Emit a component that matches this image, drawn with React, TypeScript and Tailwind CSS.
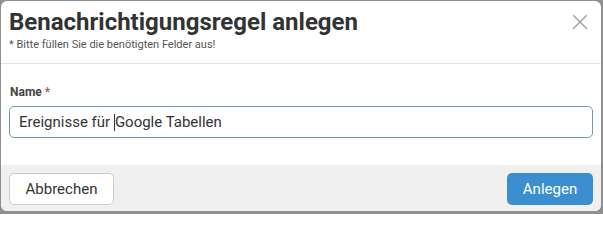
import React from "react";

export default function App() {
  return (
    <div className="w-[603px] h-[214px] bg-[#8f8f8f] pt-px pl-px" style={{ fontFamily: "Roboto, 'Liberation Sans', sans-serif" }}>
      <div className="w-[600px] h-[210px] bg-white rounded-[6px] overflow-hidden flex flex-col">
        <div className="relative px-2 pt-[7px] h-[63px] border-b border-[#e3e3e3]">
          <div className="text-[24px] leading-[28px] font-bold text-[#333333]">Benachrichtigungsregel anlegen</div>
          <div className="text-[11px] leading-[14px] text-[#555555] mt-[2px]">* Bitte füllen Sie die benötigten Felder aus!</div>
          <button className="absolute right-[13px] top-[13px] w-[16px] h-[16px] flex items-center justify-center">
            <svg width="16" height="16" viewBox="0 0 16 16" fill="none" stroke="#9a9a9a" strokeWidth="1.3" strokeLinecap="round">
              <path d="M1.5 1.5 L14.5 14.5 M14.5 1.5 L1.5 14.5" />
            </svg>
          </button>
        </div>
        <div className="px-2 pt-[20px] h-[101px] flex flex-col">
          <label className="text-[12px] leading-[16px] font-bold text-[#444444] pl-px">
            Name <span className="text-[#a85a5a]">*</span>
          </label>
          <div className="mt-[6px] h-[32px] border border-[#6a9ca8] rounded-[5px] flex items-center pl-[9px] text-[15px] text-[#333333] whitespace-pre">
            <span>{"Ereignisse für "}</span>
            <span className="inline-block w-px h-[17px] bg-[#333333]"></span>
            <span>Google Tabellen</span>
          </div>
        </div>
        <div className="flex-1 bg-[#f0f0f0] px-2 pt-2 flex justify-between items-start">
          <button className="h-[32px] w-[105px] bg-white border border-[#cccccc] rounded-[5px] text-[15px] text-[#333333]">
            Abbrechen
          </button>
          <button className="h-[32px] w-[86px] bg-[#3b8fd0] rounded-[5px] text-[15px] text-white">
            Anlegen
          </button>
        </div>
      </div>
    </div>
  );
}
